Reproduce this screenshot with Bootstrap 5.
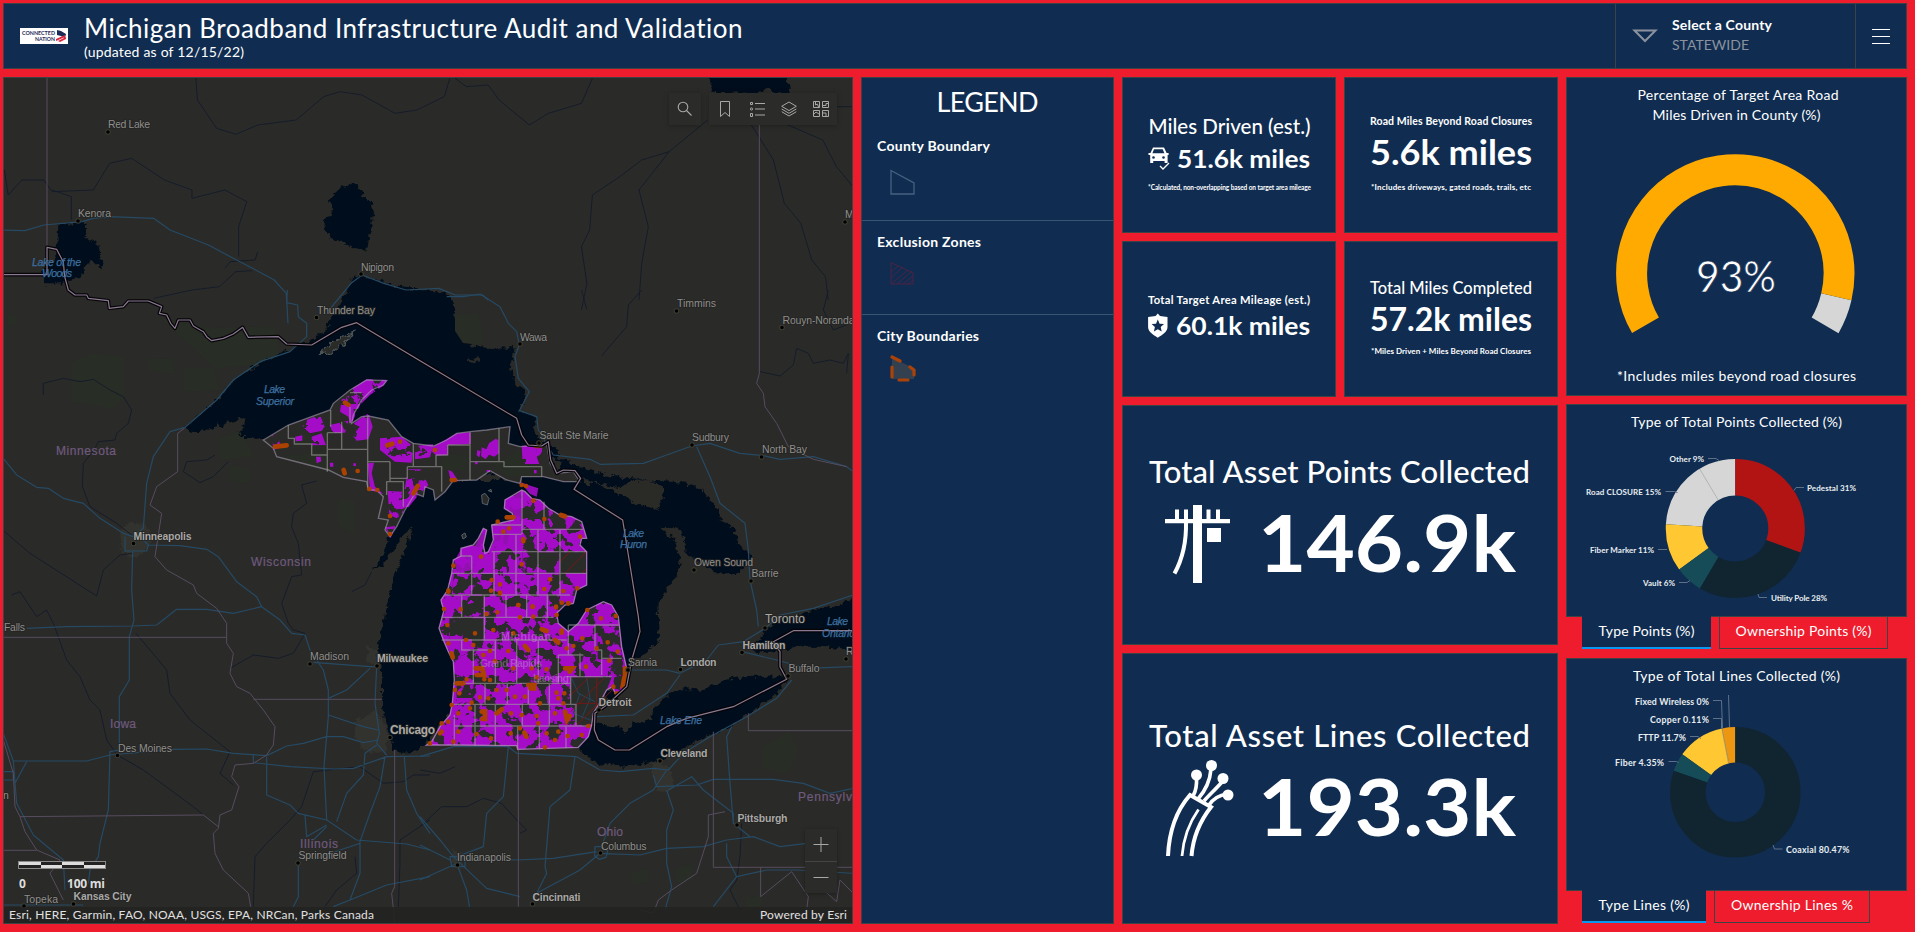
<!DOCTYPE html>
<html lang="en">
<head>
<meta charset="utf-8">
<title>Michigan Broadband Infrastructure Audit and Validation</title>
<link href="https://cdn.jsdelivr.net/npm/bootstrap@5.3.0/dist/css/bootstrap.min.css" rel="stylesheet">
<script src="https://cdn.jsdelivr.net/npm/bootstrap@5.3.0/dist/js/bootstrap.bundle.min.js"></script>
<style>
:root{--red:#ee1c2c;--navy:#102d51;--edge:#3d4345}
body{background:var(--red);color:#fff;font-family:Lato,"Liberation Sans",sans-serif;font-size:14px;line-height:20px;width:1915px;height:932px;padding:3px 8px 8px 3px;overflow:hidden}
.panel{background:var(--navy);border:1px solid var(--edge);overflow:hidden}
.topbar{height:66px}
.topbar h1{font-size:26px;line-height:30px;font-weight:400}
.brandbox{width:48px;height:16px}
.sel{width:240px;border-left:1px solid var(--edge)}
.burger{width:51px;border-left:1px solid var(--edge)}
.mute{color:#8b929d}
.board{display:grid;grid-template-columns:850px 253px 436px 341px;gap:8px;height:847px}
.mid{display:grid;grid-template-columns:214px 214px;grid-template-rows:156px 156px 240px 271px;gap:8px}
.wide{grid-column:span 2}
.panel svg,.brandbox svg{display:block}
.lg-title{font-size:27px;font-weight:400;line-height:47px;height:52px}
.lg-item{height:94px;padding:11px 15px 0;border-bottom:1px solid #3a5474}
.lg-item:first-of-type{height:91px;padding-top:6px}
.lg-item:last-child{border:0}
.lg-item b{font-weight:700;line-height:20px;display:block}
.lg-item svg{margin:8px 0 0 13px}
.gauge{height:319px}
.pts{height:213px}.lns{height:233px}
.tabs{height:32px;padding-left:16px;margin-top:-1px;gap:8px}
.tb{height:33px;line-height:30px;text-align:center;border:1px solid var(--edge);border-top:0;white-space:nowrap}
.tb.on{background:var(--navy);border:0;border-bottom:2px solid #0a97f0}
.mapwrap svg text{font-family:"Liberation Sans",sans-serif}
.tool{background:#2b2b2a;height:32px;top:15px;box-shadow:0 1px 5px rgba(0,0,0,.25)}
.tool svg{width:16px;height:16px}
.zoomer{right:15px;bottom:30px;width:32px;background:#2b2b2a;box-shadow:0 1px 4px rgba(0,0,0,.3)}
.credit{left:0;right:0;bottom:0;height:16px;background:rgba(34,34,33,.88);font-size:12px;line-height:15px;padding:0 5px;color:#e0e0e0}
.scale{left:14px;bottom:30px;width:90px;color:#ddd;font-family:"Open Sans",sans-serif;font-size:12px;line-height:18px;font-weight:700}
.ct{font-size:10.5px;fill:#8f8f8c;paint-order:stroke;stroke:#242423;stroke-width:1.5px}
.cb{font-weight:700;fill:#a9a9a6}
.st{font-size:12px;fill:#6f5a7e;stroke:#6f5a7e;stroke-width:.2px}
.wt{font-size:10.5px;font-style:italic;fill:#3d6f9f;stroke:#3d6f9f;stroke-width:.25px}
.rd path,.rv path,.bd path,.cl path,#border,#towns{vector-effect:non-scaling-stroke;fill:none;stroke-linejoin:round}
.rd path{stroke:#264a64;stroke-width:1.2px}
.rv path{stroke:#151c2a;stroke-width:1px}
.bd path{stroke:#574c5f;stroke-width:1px}
.cl path{stroke:#9c9c9a;stroke-opacity:.6;stroke-width:1.4px}
.town{stroke:#ac4200;stroke-width:14;stroke-linecap:round;fill:none}
.ind{fill:#fff}
.ind .bg{font-weight:700}.ind .md{font-weight:500}
.tinyl{font-size:8px;font-weight:700;fill:#e9edf2}
.lead-l{fill:none;stroke:#5c7089;stroke-width:1}
</style>
</head>
<body>
<header class="panel topbar d-flex align-items-stretch mb-2">
  <div class="d-flex align-items-center flex-grow-1" style="padding-left:16px">
    <div class="brandbox"><svg width="48" height="16"><rect width="48" height="16" fill="#fff"/><text x="2" y="7.2" font-size="6" font-weight="700" fill="#1c2a57" textLength="33" lengthAdjust="spacingAndGlyphs">CONNECTED</text><text x="15" y="13.4" font-size="6" font-weight="700" fill="#1c2a57" textLength="20" lengthAdjust="spacingAndGlyphs">NATION</text><path d="M37 2l4 1 5 3-1 4-4-2-4-1z" fill="#1c2a57"/><path d="M36 11l9-4v2l-9 4zM38 13l8-4v2l-6 3z" fill="#e0243b"/></svg></div>
    <div style="padding-left:16px"><h1 class="mb-0"><span data-w="659">Michigan Broadband Infrastructure Audit and Validation</span></h1><div style="line-height:17px"><span data-w="160">(updated as of 12/15/22)</span></div></div>
  </div>
  <div class="sel d-flex align-items-center">
    <svg class="ms-3 me-3" width="26" height="14" viewBox="0 0 26 14"><path d="M2.500 1.500h21L13 12z" fill="none" stroke="#8b929d" stroke-width="2"/></svg>
    <div style="line-height:20px;margin:-2px 0 0 -2px"><div class="fw-bold"><span data-w="100">Select a County</span></div><div class="mute"><span data-w="77">STATEWIDE</span></div></div>
  </div>
  <div class="burger d-flex align-items-center justify-content-center"><svg width="18" height="16"><path d="M0 1.500h18M0 8.500h18M0 15.500h18" stroke="#fff"/></svg></div>
</header>

<main class="board">
  <section class="panel mapwrap position-relative">
    <svg width="848" height="845" viewBox="4 78 848 845">
      <defs>
        <filter id="rough" x="-5%" y="-5%" width="110%" height="110%"><feTurbulence type="fractalNoise" baseFrequency=".06" numOctaves="3" seed="4"/><feDisplacementMap in="SourceGraphic" scale="26" xChannelSelector="R" yChannelSelector="G"/></filter>
        <filter id="dense" x="0" y="0" width="100%" height="100%" color-interpolation-filters="sRGB"><feTurbulence type="fractalNoise" baseFrequency=".026" numOctaves="4" seed="23"/><feColorMatrix values="0 0 0 0 .643  0 0 0 0 .047  0 0 0 0 .784  26 0 0 0 -10.8"/><feComposite in2="SourceGraphic" operator="in"/></filter>
        <filter id="thin" x="0" y="0" width="100%" height="100%" color-interpolation-filters="sRGB"><feTurbulence type="fractalNoise" baseFrequency=".03" numOctaves="3" seed="5"/><feColorMatrix values="0 0 0 0 .643  0 0 0 0 .047  0 0 0 0 .784  22 0 0 0 -12"/><feComposite in2="SourceGraphic" operator="in"/></filter>
        <path id="lp" d="M305,600 255,630 253,655 277,670 280,690 215,705 220,750 205,785 195,790 190,765 200,720 190,715 175,745 160,765 123,775 123,798 100,810 95,850 83,900 63,930 65,940 72,960 57,1015 70,1050 85,1085 100,1115 103,1170 97,1240 90,1275 60,1310 35,1355 20,1365 105,1365 290,1367 293,1378 475,1372 505,1340 515,1305 520,1270 535,1245 560,1200 577,1190 590,1220 615,1190 620,1135 605,1070 595,980 575,945 550,935 500,960 475,1000 445,1025 415,1000 410,970 435,945 460,940 470,900 500,885 500,785 480,765 485,745 500,745 485,695 455,680 420,675 385,655 360,630 335,625 315,605Z"/>
        <path id="up" d="M790,450 865,405 990,360 1000,340 1050,300 1100,270 1160,272 1150,285 1115,300 1085,330 1060,375 1055,400 1085,380 1105,378 1165,390 1205,440 1240,460 1300,468 1340,450 1370,430 1410,425 1460,420 1530,410 1525,460 1560,470 1620,465 1640,460 1645,490 1650,520 1670,550 1720,545 1740,575 1690,575 1630,560 1565,560 1560,580 1520,570 1470,542 1430,570 1360,572 1335,605 1305,630 1300,600 1275,590 1270,620 1245,610 1215,660 1190,710 1170,740 1155,720 1165,690 1135,685 1150,620 1130,600 1105,600 1100,575 1030,562 985,540 830,500 820,475Z"/>
        <path id="border" d="M-1260,-46H-1119V-128L-1090,-122-1070,-84-1066,-40-1055,0-1035,15-1000,15-995,25-935,32-932,55-890,50-875,33-815,33-775,50-782,70-760,75-748,100-735,115-725,90-690,90-680,108-650,125-640,140-625,152-590,145-560,132-532,112-515,142-425,140-400,162-325,165-235,112-190,98 0,212 290,385 305,435 325,465 365,468 385,455 392,510 410,550 430,540 465,542 482,565 462,598 608,690 655,980 660,1025 635,1110 620,1190 560,1245 525,1270 523,1320 535,1350 585,1380 628,1380 740,1310 800,1285 940,1250 1100,1168 1080,1130 1080,1085 1060,1055 1120,1022H1300"/>
        <path id="towns" d="M108,132h0M78,221h0M361,274h0M316.500,317.500h0M520,344h0M676.500,311h0M782,327.500h0M539,443h0M692,445h0M761.500,457h0M694,570h0M751,581h0M133.500,543.500h0M310,664h0M377,666h0M390,737.500h0M117.500,755.500h0M298,863h0M24,906h0M73.500,904h0M765,628h0M742,652.500h0M680.500,669.500h0M788,676h0M628,670h0M599,710h0M660,761h0M600.500,853h0M737,825h0M532.500,904h0M457.500,865h0M846,659h0M845,222h0"/>
      </defs>
      <rect x="3" y="77" width="850" height="847" fill="#2a2a28"/>
      <!-- forests and urban areas -->
      <g fill="#282d26">
        <path d="M160,318l55,10 60,-2 5,30-20,8-45,5-25,-24zM72,362l20,-9 32,4v40l-12,12-40,-8zM148,358l24,1 4,15-28,-4zM184,368h30l6,22-36,2zM220,438l22,-8 12,26-34,4zM230,465l20,4v14l-22,-2zM338,500h16v34l-16,-8zM8,315h8v10h-8z"/>
        <path d="M762,746l28,-14 8,20-10,22-26,-5zM630,872l18,-3v12l-16,4zM676,868l16,-4v16l-16,3zM745,900l16,-5v14h-14z"/>
      </g>
      <g fill="#30302e" filter="url(#rough)" transform="scale(.33333)"><path d="M354,1590l36,-24 54,12 6,60-48,42-36,-24zM1065,2166l60,-36 36,54v72l-54,6-42,-48zM1950,2286l60,12 12,66-48,12zM1356,2550l30,6v36h-30zM1104,1935l30,12-6,48-30,-6z"/></g>
      <!-- lakes -->
      <g fill="#000e1a" filter="url(#rough)" transform="translate(420 290) scale(.33333)">
        <path d="M-219,0 -204,-36 -177,-45 -126,-30 -75,-12 0,0 66,6 96,21 114,105 150,165 201,174 285,171 270,240 294,285 321,306 297,363 351,384 339,426 375,465 420,480 360,540 -60,570 -420,480 -465,447 -501,441 -540,441 -522,381 -561,393 -639,420 -687,426 -705,411 -609,330 -558,270 -480,216 -390,180 -369,165 -324,150 -285,120 -261,75 -240,45Z"/>
        <path d="M30,570 -40,650 -96,741 -111,789 -144,840 -111,825 -75,774 -30,714 -25,720 -45,780 -75,855 -96,930 -105,990 -126,1059 -114,1140 -114,1260 -96,1311 -81,1380 -39,1392 15,1365 120,1230 240,810 360,630 330,570Z"/>
        <path d="M300,560 360,455 395,490 430,510 520,548 600,560 700,572 800,578 850,600 880,640 905,690 940,715 960,765 995,800 985,825 940,857 880,845 850,825 800,790 790,740 770,712 720,710 765,750 780,800 775,850 735,910 715,940 719,1040 690,1080 640,1110 625,1140 600,1180 550,1020 420,1060 400,970 480,800 330,600Z"/>
        <path d="M520,1290 545,1305 600,1310 610,1330 640,1300 690,1290 700,1260 740,1215 800,1195 850,1200 930,1165 1000,1160 1080,1160 1105,1165 1060,1220 990,1270 930,1310 860,1340 800,1370 750,1400 700,1415 610,1430 560,1420 540,1425 490,1390 470,1370 500,1330Z"/>
        <path d="M1310,920 1240,950 1150,970 1060,1000 1035,1020 1020,1050 990,1075 1010,1088 1080,1083 1120,1070 1200,1070 1310,1082Z"/>
        <path d="M550,1215 585,1190 600,1225 570,1245Z"/>
      </g>
      <path d="M455,315l24,-2 4,26-3,6-17,-2-8,-12z" fill="#282d26"/>
      <g fill="#000e1a" filter="url(#rough)" transform="scale(.33333)">
        <path d="M1028,560 1069,552 1090,580 1102,600 1122,625 1110,700 1099,750 1060,740 987,715 970,660 997,640 987,600Z"/>
        <path d="M175,675 260,665 255,710 295,735 312,810 270,780 246,830 190,850 131,850 123,810 164,780 172,720Z"/>
        <path d="M2125,220 2352,220 2375,280 2320,280 2300,262 2265,282 2138,278Z"/>
      </g>
      <g fill="#2a2a28" filter="url(#rough)" transform="translate(420 290) scale(.33333)">
        <path d="M520,575 600,592 640,572 690,570 735,595 715,660 640,640 600,612Z"/>
        <path d="M395,500 425,515 420,540 400,530ZM140,210 175,205 180,218 150,218ZM490,565l30,10-20,15z"/>
        <path d="M-300,190 -250,150 -200,125 -220,155 -270,190Z" stroke="#4b5557" stroke-width="4"/>
      </g>
      <g fill="#2a2a28" stroke="#56606a" stroke-width="3" transform="translate(420 290) scale(.33333)"><path d="M185,615l10,-5 12,15-5,20-15,-5zM125,735l10,-6 4,12-10,6zM205,602l8,-4 2,8z"/></g>

      <!-- rivers -->
      <g class="rv">
        <g transform="translate(0 290) scale(.33333)"><path d="M130,315 130,280 190,265 240,275 280,268 330,300 370,320 395,360 385,400 350,430 345,450 295,455 285,475 250,520 247,590 270,650 350,700 395,735M10,722 90,790 290,918 310,840 360,795 400,790M35,915 60,905 110,980 140,960 160,1000 200,1110 240,1160 270,1230 300,1260 320,1350 352,1395 430,1440 580,1550 610,1575M408,1030 450,1080 500,1140 510,1210 570,1290 620,1330 690,1385 660,1450 700,1485M550,545 560,515 620,510 645,495M550,545 600,578 640,560 685,515M950,573 905,585 920,640 880,670 875,710 895,760 905,855 875,860 845,940 865,1000 880,1020 915,1030 880,1090 835,1105 760,1095 690,1135M1055,905 1095,885 1115,845M1290,1455 1240,1455 1210,1475 1150,1480 1080,1430 940,1445 905,1550 870,1590 800,1660 765,1700 760,1850M1290,1590 1200,1650 1200,1720 1195,1850M975,1850 1010,1800 1070,1750 1065,1700"/></g>
        <g transform="translate(420 290) scale(.33333)"><path d="M485,0 500,58M665,0 625,45 620,110 545,197M1225,0 1210,60 1240,120 1290,100M1020,245 1080,258 1120,225 1130,175 1165,190 1180,220 1230,210 1270,220 1285,190 1280,250M0,1440 60,1450 105,1430M0,1610 65,1550 140,1550 190,1525 245,1540 290,1590 320,1620 300,1630M965,1600 960,1700 950,1770 930,1800 960,1860"/></g>
        <g transform="scale(.5485 .33333)"><path d="M357,233 360,300 395,385 430,403 470,375 540,360 590,290 620,275 660,285 720,340 760,330 810,290 820,235M830,235 850,260 890,255 910,300 965,375 1000,340 1060,310 1080,235M8,510 15,585 40,540 80,540 95,575 170,570 200,490 240,475 300,540 350,570 350,595 410,570 450,605 435,680 435,770M130,660 130,590 95,570M410,805 420,785 465,780 470,755M280,895 350,870 400,860 430,815 460,812M1290,360 1220,455 1170,480 1130,530 1080,585 1075,690 1060,740 1070,850 1060,930M1220,455 1165,570 1182,680 1170,790 1165,900M1370,375 1410,480 1430,610 1460,670 1480,780 1505,830 1510,900M1430,370 1500,420 1525,500 1555,560M1525,320H1560"/></g>
      </g>
      <!-- highways -->
      <g class="rd">
        <g transform="translate(0 290) scale(.33333)"><path d="M10,505 50,555 110,592 145,595 190,625 250,640 300,685 370,730 400,740 430,715 440,580 460,500 510,425 555,412 650,330 700,270 780,215 870,185 920,140 920,100 895,80 893,45 860,38 862,0M375,740V783H440L445,765 420,740M445,765 540,767 620,778 655,800 710,875 770,920 785,950 840,990 875,1030 915,1035 930,1080 970,1140 985,1200 985,1280 972,1430 980,1590M398,785 395,900 402,990 388,1040 388,1170 358,1220 358,1380 330,1385 325,1560 300,1660 295,1700 270,1740 265,1780M80,1015 200,1010 400,1008 470,1005 530,958 620,958 700,970 785,950M40,1413 260,1413 330,1395 520,1378 620,1377 700,1390 800,1397 860,1368 910,1360 980,1340 1030,1340 1090,1358 1135,1350M760,1395 760,1418 870,1430 1000,1437 1060,1435 1160,1400 1290,1398M800,1400 800,1515 870,1545 895,1570 980,1590 1070,1650 1220,1662 1290,1680M940,1117 1110,1130 1130,1130 1125,1240 1138,1330 1130,1360 1160,1395M985,1225 1040,1200 1110,1135M985,1275 1090,1310 1135,1320M1010,1595 1040,1510 1090,1455 1095,1390 1130,1365M1155,1400 1140,1490 1110,1570 1080,1655 1080,1750 1050,1830 1000,1850M1213,1400 1220,1500 1250,1570 1290,1630M895,1720 895,1820 880,1850M915,1575 920,1640 980,1605M940,1710 1020,1680 1080,1660M1050,1830 1160,1785 1290,1760M10,1330 40,1413 50,1540 100,1635 190,1710 195,1800M45,1480 80,1415M10,1445 40,1445 40,1470 12,1470M10,1845 250,1845M940,1650 980,1610"/></g>
        <g transform="translate(420 290) scale(.33333)"><path d="M80,20 130,20 180,12 240,50 265,100 290,125 298,165 285,200 295,265 328,305 298,362 350,380 355,420 385,470 400,495 510,508 540,523 670,520 740,495 815,468 870,460 960,490 1030,497 1080,508 1180,500 1280,530 1300,545M830,470 870,560 900,640 975,700 985,780 990,870 1010,960 1015,1010M1300,915 1180,955 1080,975 1035,1015 970,1055 895,1065 860,1110 780,1150 740,1140 620,1140M780,1155 740,1210 640,1275 530,1280M965,1085 1070,1110 1160,1135 1300,1130M1115,1170 1070,1225 980,1280 870,1340 790,1390 745,1440 700,1435 600,1445 540,1440 470,1400 290,1390 265,1370 100,1370 0,1400M265,1370 250,1520 200,1570 190,1670 110,1700M465,1400 450,1500 390,1550 375,1730 380,1750 340,1830M0,1580 60,1650 100,1700 200,1795 300,1820M0,1665 90,1710M0,1770 100,1725 110,1720 140,1800 150,1860M130,1705 290,1710 400,1705 530,1685M540,1690 660,1695 740,1675 850,1670 920,1650 1000,1640 1080,1670 1160,1660M540,1690 480,1740 350,1810M545,1670 570,1600 630,1540 700,1500 740,1440M740,1500 760,1560 740,1620 740,1720 755,1790 735,1860M700,1455 710,1490 830,1485 880,1468 1060,1468 1150,1480 1230,1510 1300,1495M745,1500 815,1460 850,1500 940,1570 940,1600 990,1640M920,1660 920,1700 950,1760 1040,1740 1130,1740 1300,1750M950,1760 880,1850M935,1310 920,1340 930,1480 940,1600M525,1670h20l18,12-5,20-20,6-14,-10zM90,1700h45v30h-40z"/></g>
        <g transform="scale(.5485 .33333)"><path d="M0,690 45,692 80,675 150,665 170,655 200,650 280,655 310,690 380,735 420,770 455,800 500,840 522,880 525,970M600,930 640,850 660,825 700,850 740,870 800,865 830,885 880,885 890,900"/></g>
      </g>
      <!-- state lines -->
      <g class="bd">
        <g transform="translate(0 290) scale(.33333)"><path d="M553,415 533,430 533,545 470,590 450,645 485,670 465,800 500,840 580,885 590,910 650,955 680,1000 680,1060 700,1090 690,1150 710,1190 750,1210 790,1260 825,1310 820,1365 800,1395 760,1420 705,1425 695,1460 717,1490 695,1560 660,1575 655,1615 640,1630 645,1690 670,1740 745,1810 752,1850M10,1042H680M760,1228H1147M60,1580 610,1575 655,1610M10,1681H110M60,1580 75,1625 110,1680 180,1710 150,1750 190,1830M10,1350 40,1450 45,1550 60,1580M1184,1380V1790L1175,1810 1185,1900"/></g>
        <g transform="translate(420 290) scale(.33333)"><path d="M295,1380V1850M880,1325V1732H1300M985,1270V1322H1300M1018,-500V250L1010,280 1030,310 1035,350 1070,400 1105,470 1180,508 1280,530M1022,1732V1820L1115,1745 1165,1820 1160,1860M1165,1760 1250,1835 1260,1770 1300,1810M915,1565 865,1575 865,1640 830,1750 755,1800 715,1830 700,1870 660,1860"/></g>
        <path d="M47,78V275"/>
      </g>
      <!-- Michigan -->
      <g transform="translate(0 290) scale(.33333)">
        <use href="#up" fill="#2a2b28"/>
        <path d="M868,440 982,425V540L840,500 935,490V465H885ZM1325,495H1400V540H1325ZM1420,470 1490,520 1560,480 1600,560H1520Z" fill="#282d26"/>
        <path d="M1050,300 1100,268 1162,270 1150,287 1110,315 1080,345 1062,385 1055,405 1105,368 1118,410 1105,448 1070,452 1050,425 1050,400 1045,380 1020,365 1025,330ZM895,398 960,375 978,420 930,430ZM935,440 965,430 978,465 936,466ZM990,405 1045,392 1035,428 998,430ZM815,435 835,438 842,472 820,480ZM1140,445 1205,440 1240,470 1235,518 1185,515 1140,480ZM1245,468 1300,463 1290,502 1245,508ZM1225,538 1262,538 1285,585 1250,622 1215,664 1190,685 1168,675 1163,603 1212,605ZM1155,712 1187,708 1172,744ZM1565,468 1640,460 1642,482 1610,500 1618,522 1568,522Z" filter="url(#dense)"/>
        <g fill="#a40cc8">
          <path d="M1260,490 1300,470 1370,430 1412,427 1412,462 1343,465 1343,495 1310,497 1290,480ZM1103,520 1122,518 1115,550 1125,590 1150,612 1110,600ZM1345,540l12,5 18,28-22,2zM1445,472l14,6 8,-18 20,-14 8,4 2,40-14,10-16,-6-10,14-14,-10zM1432,480l10,4-4,18-8,-6zM948,500l14,0 2,14-14,6zM1262,570l18,5v18l-20,2zM885,440l22,-4v16l-20,2zM990,518h10v12h-10zM1060,520h8v8h-8zM1425,515h8v8h-8zM1460,540h10v6h-10zM1602,540h8v10h-8z"/>
        </g>
      </g>
      <g transform="translate(420 290) scale(.33333)">
        <use href="#lp" fill="#2a2c29"/>
        <g filter="url(#dense)"><use href="#lp"/></g>
        <path fill="#a40cc8" d="M305,603 258,632 256,655 280,670 282,692 218,707 222,750 210,785 200,800H225L240,770 290,780 300,700 305,680ZM123,778 165,768 190,722 196,735 185,790 160,840 110,848 104,812Z" opacity=".85"/>
        <path fill="#2a2c29" d="M377,650 420,675 455,690 440,716H377ZM308,787H418V848H308ZM102,852H220V913H95ZM125,917h66v63h-66zM88,985h103v63h-103zM533,1008h64l8,100h-72zM420,787h80v62h-80zM452,1162H575L560,1200 535,1245 515,1303 470,1305V1243H452ZM110,1184h50v40h-50z"/>
        <path filter="url(#thin)" d="M377,650 420,675 465,690V716H377ZM308,787H418V848H308ZM102,852H220V913H95ZM125,917h66v63h-66zM88,985h40v63h-40zM533,1008h64l8,100h-72zM110,1184h50v40h-50z"/>
        <path d="M455,1165l20,45 50,25M480,1210l-20,60 50,20M500,1165l10,60-25,60" stroke="#25455c" stroke-width="3" fill="none"/>
        <path d="M420,815l30,-30M435,850l65,-65M485,850l15,-15M452,1215l55,-53M452,1265l100,-100M470,1305l110,-108M470,1240h60M530,1162v90" stroke="#721818" stroke-width="3" fill="none"/>
        <path d="M300,575l25,10 30,10-5,25-20,-8z" fill="#a40cc8" opacity=".9"/>
      </g>
      <g class="cl">
        <g transform="translate(0 290) scale(.33333)"><use href="#up" fill="none" stroke="#a79bb0" stroke-opacity=".6" stroke-width="4"/><path d="M992,360V410M865,405V445H883V462H935V495H982M982,428V545M1025,395V478M982,428H1025M982,478H1103M1103,380V600M1103,515H1170M1170,515V575H1160V615M1170,565H1222M1222,530V565M1222,530H1325V605M1240,460V530M1308,495V530M1343,465V495H1308M1343,465H1410M1410,427V570M1410,515H1512V530H1625V560M1497,415V515M1050,308H1085M1050,350V400M1160,575H1210V650"/></g>
        <g transform="translate(420 290) scale(.33333)"><use href="#lp" fill="none" stroke="#b986c8" stroke-opacity=".8" stroke-width="4"/><path d="M215,705H305M305,718H490M220,733H305M215,785H500M95,850H500M75,915H450M306,600V733M372,635V718M288,733V915M354,718V915M420,718V915M222,785V915M155,798V915M123,798H155M125,915V980M65,982H400M193,915V1050M258,915V982M320,915V982M382,915V982M65,1050H440M125,1050V1080H226M160,1080V1180M226,1050V1180M290,1050V1180M355,1050V1180M415,1095V1180M100,1180H450M415,1095H490M480,1090V1160M445,1005V1095M440,1160H575M525,1005V1080H545V1155M445,1005H595M545,1105H605M97,1243H468M195,1180V1243M262,1180V1243M325,1180V1243M388,1180V1308M165,1243V1367M103,1275V1365M226,1243V1367M307,1243V1308M103,1308H515M358,1308V1378M293,1308V1378M438,1308V1375M452,1160V1243M468,1243V1308"/></g>
      </g>
      <g class="town">
        <path transform="translate(425 590) scale(.33333)" d="M70,5h0M225,8h0M57,57h0M107,58h0M185,72h0M217,67h0M280,45h0M323,50h0M285,82h0M325,80h0M393,50h0M430,40h0M395,75h0M487,60h0M528,85h0M572,78h0M67,105h0M150,130h0M123,150h0M145,165h0M70,160h0M205,120h0M265,130h0M350,118l15,5M410,122v6M390,150l10,8M472,145h0M548,157h0M425,175h0M445,168h0M515,175h0M578,185h0M553,212h0M80,190l3,12M195,183h0M175,195h0M210,213h0M250,183h0M300,168l10,12M152,235h20l5,20h-22M265,235h0M320,235h0M335,262h0M365,238h0M420,235h22l-8,10M483,230h0M600,235v20M598,262l-5,28M575,310h0M565,290h0M90,300h0M95,280h20M125,268h0M103,310h0M178,268h0M195,270h0M215,300h0M165,322h0M190,325h0M245,300h0M270,320h0M310,285h18v10h-12M300,320h0M345,340h0M395,308h0M418,310h0M400,325h0M415,340h0M140,338h0M135,355h0M80,345h0M100,370h0M70,395h0M50,400h0M45,430h0M170,365h10v22h-8M215,370l15,-12M258,370h0M290,375h0M335,378h0M390,370h0M420,365l6,25 8,-12M340,400h0M50,425h0M100,425h0M155,432h0M198,445h0M257,430h0M285,415h0M298,428l6,12M365,430h0M390,450h0M400,425h0M428,438h0M470,435h0M490,408h0M360,472h0M15,460h0M85,455h0"/>
        <path transform="translate(425 430) scale(.33333)" d="M245,262h20M218,275h0M252,295h0M235,305h0M325,212h0M358,267h0M408,255l12,4M465,320h0M295,328v6M168,380h0M85,407h0M290,403h0M200,450h0M225,463h0M198,482h0M225,490h0M375,448h0M358,477h0M415,483h0M457,475h0M70,482h0M430,520h0M410,518h0M393,532h0M280,525h0M323,530h0M290,165h0M303,168h0M332,48h16M30,60h0M80,150h10"/>
        <path transform="translate(0 290) scale(.33333)" d="M825,470l35,-4M1035,338l10,6M1162,466l15,-5M1200,455h0M1031,540l3,10M1073,543h0M1108,597h0M1132,600h0M1240,610l13,-22M1170,678h0M1170,732h0"/>
      </g>
      <!-- national border -->
      <g transform="translate(420 290) scale(.33333)"><use href="#border" stroke="#050506" stroke-width="3.6"/><use href="#border" stroke="#8b7993" stroke-width="1.2"/></g>
      <!-- place markers -->
      <g stroke-linecap="round"><use href="#towns" stroke="#3c3d33" stroke-width="5.500"/><use href="#towns" stroke="#000" stroke-width="3.600"/></g>
      <g class="ct">
        <text x="108" y="128" textLength="42">Red Lake</text><text x="78" y="217" textLength="33">Kenora</text><text x="361" y="271" textLength="33">Nipigon</text><text x="317" y="313.500" textLength="58">Thunder Bay</text><text x="520" y="340.500" textLength="27">Wawa</text><text x="677" y="307" textLength="39">Timmins</text><text x="782.500" y="323.500" textLength="72">Rouyn-Noranda</text><text x="539.500" y="439" textLength="69">Sault Ste Marie</text><text x="692" y="441" textLength="37">Sudbury</text><text x="762" y="453" textLength="45">North Bay</text><text x="694" y="566" textLength="59">Owen Sound</text><text x="751.500" y="577" textLength="27">Barrie</text><text x="4" y="630.500" textLength="21">Falls</text><text x="310" y="660" textLength="39">Madison</text><text x="118" y="751.500" textLength="54">Des Moines</text><text x="298.500" y="859" textLength="48">Springfield</text><text x="24" y="903" textLength="34">Topeka</text><text x="765" y="623" style="font-size:12px;fill:#a9a9a6" textLength="40">Toronto</text><text x="788.500" y="672" textLength="31">Buffalo</text><text x="628" y="666" textLength="29">Sarnia</text><text x="601" y="849.500" textLength="45.500">Columbus</text><text x="457" y="861" textLength="54">Indianapolis</text><text x="846" y="655">R</text><text x="845" y="218">M</text><text x="3" y="799">n</text>
      </g>
      <g class="ct cb">
        <text x="133.500" y="539.500" textLength="58">Minneapolis</text><text x="377" y="662" textLength="51">Milwaukee</text><text x="390" y="733.500" style="font-size:12px" textLength="45">Chicago</text><text x="73.500" y="900" textLength="58">Kansas City</text><text x="742.500" y="649" textLength="43">Hamilton</text><text x="680.500" y="666" textLength="36">London</text><text x="598.500" y="706" textLength="33">Detroit</text><text x="660.500" y="757" textLength="47">Cleveland</text><text x="737.500" y="821.500" textLength="50">Pittsburgh</text><text x="532.500" y="900.500" textLength="48">Cincinnati</text>
      </g>
      <g style="font-size:10.500px;fill:#cfc3d6;opacity:.32;font-weight:700"><text x="501" y="639.500" textLength="50">Michigan</text><text x="480" y="667" textLength="62">Grand Rapids</text><text x="533" y="681.500" textLength="36">Lansing</text></g>
      <g class="st"><text x="56" y="454.500" textLength="60">Minnesota</text><text x="251" y="566" textLength="60">Wisconsin</text><text x="110" y="728" textLength="26">Iowa</text><text x="300" y="847.500" textLength="38">Illinois</text><text x="597" y="835.500" textLength="26">Ohio</text><text x="798" y="801" textLength="54">Pennsylv</text></g>
      <g class="wt"><text x="264" y="393" textLength="21">Lake</text><text x="256" y="404.500" textLength="38">Superior</text><text x="623" y="537" textLength="21">Lake</text><text x="620" y="548" textLength="27">Huron</text><text x="660" y="723.500" textLength="42">Lake Erie</text><text x="827" y="625" textLength="21">Lake</text><text x="822" y="636.500" textLength="33">Ontario</text><text x="32" y="266" textLength="49">Lake of the</text><text x="42" y="277" textLength="30">Woods</text></g>
    </svg>
    <div class="tool position-absolute d-flex align-items-center justify-content-center" style="right:151px;width:32px"><svg viewBox="0 0 16 16" fill="none" stroke="#a8a8a6" stroke-width="1.100"><circle cx="6" cy="6" r="4.800"/><path d="M9.500 9.500l5 5"/></svg></div>
    <div class="tool position-absolute d-flex align-items-center justify-content-around" style="right:15px;width:128px">
      <svg viewBox="0 0 16 16" fill="none" stroke="#a8a8a6"><path d="M3.500.5h9v15l-4.500-4-4.500 4z"/></svg>
      <svg viewBox="0 0 16 16" fill="none" stroke="#a8a8a6"><path d="M6 2.500h10M6 8h10M6 14h10M1.500 1.500h2v2h-2zM1.500 12.500h2v3h-2z"/><circle cx="2.500" cy="8" r="1.100"/></svg>
      <svg viewBox="0 0 16 16" fill="none" stroke="#a8a8a6"><path d="M8 1l7.300 4.300L8 9.600.7 5.300zM.7 8L8 12.300 15.300 8M.7 10.700L8 15l7.300-4.300"/></svg>
      <svg viewBox="0 0 16 16" fill="none" stroke="#a8a8a6"><path d="M.5.5h6v6h-6zM9.500.5h6v6h-6zM.5 9.500h6v6h-6zM9.500 9.500h6v6h-6zM2.500 1v3l2-1 1 3M10 4.500h3v-2h2M1 13l2-2 3 2M10 12h3v3"/></svg>
    </div>
    <div class="zoomer position-absolute"><svg width="32" height="64" fill="none" stroke="#a8a8a6"><path d="M8.500 15.500h15M16 8v15M8.500 48.500h15"/><path d="M0 32.500h32" stroke="#444442"/></svg></div>
    <div class="scale position-absolute"><svg width="88" height="8" style="margin-bottom:6px"><rect x=".5" y=".5" width="87" height="7" fill="#222" stroke="#8a8a88"/><path d="M1 1h22v3h-22zM44 1h22v3h-22zM23 4h21v3h-21zM66 4h21v3h-21z" fill="#ddd"/></svg><div class="d-flex justify-content-between" style="padding:0 3px 0 1px"><span>0</span><span data-w="38">100 mi</span></div></div>
    <div class="credit position-absolute d-flex justify-content-between"><span data-w="365">Esri, HERE, Garmin, FAO, NOAA, USGS, EPA, NRCan, Parks Canada</span><span data-w="87">Powered by Esri</span></div>
  </section>

  <section class="panel">
    <header class="lg-title text-center"><span data-w="102">LEGEND</span></header>
    <div class="lg-item"><b><span data-w="113">County Boundary</span></b><svg width="25" height="26" style="margin-top:13px"><path d="M1 1.500L24 14v11H1z" fill="none" stroke="#46607f" stroke-width="1.300"/></svg></div>
    <div class="lg-item"><b><span data-w="104">Exclusion Zones</span></b><svg width="25" height="26"><path d="M1 2.500L23 13v11H1z" fill="none" stroke="#4a2345"/><path d="M1 12l7-6M1 18l12-11M1 24l17-14M7 24l15-13M13 24l10-8M18 24l5-4" stroke="#4a2345"/></svg></div>
    <div class="lg-item"><b><span data-w="102">City Boundaries</span></b><svg width="28" height="28"><path d="M2 4L24 14v11H2z" fill="#33404f"/><path d="M2 3l8 4M2 13v10M9 26h9M20 13l4 3v5" fill="none" stroke="#ab4208" stroke-width="3.200" stroke-linecap="round"/></svg></div>
  </section>

  <section class="mid">
    <div class="panel"><svg class="ind" width="212" height="154" viewBox="1123 78 212 154"><text class="md" x="1148.500" y="134" font-size="20.500" textLength="162" lengthAdjust="spacingAndGlyphs">Miles Driven (est.)</text>
      <path d="M1153 147.500h11l2.600 5.500h2v2h-1v8h-3v-2h-11.400v2h-3v-8h-1.700v-2h2zM1154 149.300l-1.600 4h12l-1.700-4z" fill-rule="evenodd"/><circle cx="1153.500" cy="157.500" r="1.300" fill="#102d51"/><circle cx="1163.500" cy="157.500" r="1.300" fill="#102d51"/><path d="M1160 166l3 3 6-6" fill="none" stroke="#fff" stroke-width="1.300"/>
      <text class="bg" x="1177" y="168" font-size="25.500" textLength="133" lengthAdjust="spacingAndGlyphs">51.6k miles</text><text class="bg" x="1148" y="190" font-size="6.500" textLength="163">*Calculated, non-overlapping based on target area mileage</text></svg></div>
    <div class="panel"><svg class="ind" width="212" height="154" viewBox="1345 78 212 154"><text class="bg" x="1370" y="125" font-size="10.500" textLength="162">Road Miles Beyond Road Closures</text><text class="bg" x="1370" y="165" font-size="34" textLength="162" lengthAdjust="spacingAndGlyphs">5.6k miles</text><text class="bg" x="1371" y="189.500" font-size="8" textLength="160">*Includes driveways, gated roads, trails, etc</text></svg></div>
    <div class="panel"><svg class="ind" width="212" height="154" viewBox="1123 242 212 154"><text class="bg" x="1148" y="303.500" font-size="11.200" textLength="162">Total Target Area Mileage (est.)</text>
      <path d="M1157.800 313.500l2.200 2.500 7.500 1v10c0 5-5 7.500-9.700 10.700-4.700-3.200-9.700-5.700-9.700-10.700v-10l7.500-1z"/><path d="M1157.800 319.500l1.800 4.200 4.400.4-3.300 3 1 4.500-3.900-2.400-3.900 2.400 1-4.500-3.300-3 4.400-.4z" fill="#102d51"/>
      <text class="bg" x="1176" y="335" font-size="25.500" textLength="134" lengthAdjust="spacingAndGlyphs">60.1k miles</text></svg></div>
    <div class="panel"><svg class="ind" width="212" height="154" viewBox="1345 242 212 154"><text class="md" x="1370" y="293.500" font-size="16.500" textLength="162">Total Miles Completed</text><text class="bg" x="1370" y="331" font-size="32" textLength="162" lengthAdjust="spacingAndGlyphs">57.2k miles</text><text class="bg" x="1371" y="354" font-size="8" textLength="160">*Miles Driven + Miles Beyond Road Closures</text></svg></div>
    <div class="panel wide"><svg class="ind" width="434" height="238" viewBox="1123 406 434 238"><text class="md" x="1149" y="482.800" font-size="31" textLength="381">Total Asset Points Collected</text>
      <path d="M1193 505h9v78h-9zM1165 519h65v4.300h-65zM1175 509.500h4v10h-4zM1184 509.500h4v10h-4zM1206.500 509.500h4v10h-4zM1216 509.500h4v10h-4zM1207 528h14v14h-14z"/><path d="M1186 522c.5 20-3 36-11.500 51.500" fill="none" stroke="#fff" stroke-width="4"/>
      <text class="bg" x="1258" y="572" font-size="78" textLength="258" lengthAdjust="spacingAndGlyphs">146.9k</text></svg></div>
    <div class="panel wide"><svg class="ind" width="434" height="269" viewBox="1123 654 434 269"><text class="md" x="1149" y="746.800" font-size="31" textLength="381">Total Asset Lines Collected</text>
      <g fill="none" stroke="#fff" stroke-width="4"><path d="M1168 856c1-24 8-45 22-61l21 12c-11 14-18 30-19.500 49"/><path d="M1182 856c1.500-18 7-33 16.500-46.500" stroke-width="2.800"/><path d="M1193 796c3-5 4-11 3.500-19M1198 799c7-8 12-17 13-30M1204 801c5-6 11-11 18-19M1209 805c4-6 11-10 18-11" stroke-width="3.600"/></g><circle cx="1196.500" cy="775" r="5.500"/><circle cx="1211.500" cy="765.500" r="5.500"/><circle cx="1223" cy="778.500" r="5.500"/><circle cx="1228" cy="795" r="5.500"/>
      <text class="bg" x="1258" y="835.700" font-size="78" textLength="258" lengthAdjust="spacingAndGlyphs">193.3k</text></svg></div>
  </section>

  <section class="d-flex flex-column">
    <div class="panel gauge flex-shrink-0"><svg class="ind" width="339" height="317" viewBox="1567 78 339 317" font-size="14">
      <text x="1637.500" y="100" textLength="201">Percentage of Target Area Road</text><text x="1652.500" y="120" textLength="168">Miles Driven in County (%)</text>
      <g fill="none" stroke-width="31"><circle cx="1735.300" cy="273.500" r="103.700" pathLength="360" stroke="#d6d6d6" stroke-dasharray="17 400" stroke-dashoffset="-223" transform="rotate(150 1735.300 273.500)"/><circle cx="1735.300" cy="273.500" r="103.700" pathLength="360" stroke="#ffaa00" stroke-dasharray="223 400" transform="rotate(150 1735.300 273.500)"/></g>
      <text x="1696" y="292" font-size="43" font-weight="400" textLength="80" lengthAdjust="spacingAndGlyphs" stroke="#102d51" stroke-width=".7">93%</text>
      <text x="1617" y="381" textLength="239">*Includes miles beyond road closures</text></svg></div>
    <div class="panel pts flex-shrink-0 mt-2"><svg class="ind" width="339" height="211" viewBox="1567 405 339 211" font-size="14">
      <text x="1631" y="427" textLength="211">Type of Total Points Collected (%)</text>
      <g fill="none" stroke-width="36.500" transform="rotate(-90 1735.300 528.500)">
        <circle cx="1735.300" cy="528.500" r="51.300" pathLength="360" stroke="#d6d6d6" stroke-dasharray="86.400 400" stroke-dashoffset="-273.600"/>
        <circle cx="1735.300" cy="528.500" r="51.300" pathLength="360" stroke="#ffc832" stroke-dasharray="39.800 400" stroke-dashoffset="-233.800"/>
        <circle cx="1735.300" cy="528.500" r="51.300" pathLength="360" stroke="#154c57" stroke-dasharray="23.200 400" stroke-dashoffset="-210.600"/>
        <circle cx="1735.300" cy="528.500" r="51.300" pathLength="360" stroke="#112530" stroke-dasharray="100.300 400" stroke-dashoffset="-110.300"/>
        <circle cx="1735.300" cy="528.500" r="51.300" pathLength="360" stroke="#b21414" stroke-dasharray="110.300 400"/></g>
      <path d="M1699.700 469l18.500 31" stroke="#a9abb0" stroke-width=".8"/>
      <path class="lead-l" d="M1708 458.500h8l3 2M1665.500 491.500h9l3 1M1658 549.500h9M1679 582.500h8l3-2M1794 490.500l2-3h8M1758 594l1 3.500h8"/>
      <g class="tinyl"><text x="1669.500" y="461.500" textLength="34.500">Other 9%</text><text x="1586" y="494.500" textLength="75">Road CLOSURE 15%</text><text x="1590" y="552.500" textLength="64">Fiber Marker 11%</text><text x="1643" y="585.500" textLength="32">Vault 6%</text><text x="1807" y="490.500" textLength="49">Pedestal 31%</text><text x="1771" y="601" textLength="56">Utility Pole 28%</text></g></svg></div>
    <div class="tabs d-flex flex-shrink-0"><div class="tb on" style="width:129px"><span data-w="96">Type Points (%)</span></div><div class="tb" style="width:169px"><span data-w="136">Ownership Points (%)</span></div></div>
    <div class="panel lns flex-shrink-0" style="margin-top:10px"><svg class="ind" width="339" height="231" viewBox="1567 659 339 231" font-size="14">
      <text x="1633" y="681" textLength="207">Type of Total Lines Collected (%)</text>
      <g fill="none" stroke-width="35.500" transform="rotate(-90 1735.300 792.300)">
        <circle cx="1735.300" cy="792.300" r="47.500" pathLength="360" stroke="#ec9612" stroke-dasharray="11.900 400" stroke-dashoffset="-348.100"/>
        <circle cx="1735.300" cy="792.300" r="47.500" pathLength="360" stroke="#ffc832" stroke-dasharray="42.500 400" stroke-dashoffset="-305.600"/>
        <circle cx="1735.300" cy="792.300" r="47.500" pathLength="360" stroke="#154c57" stroke-dasharray="16.200 400" stroke-dashoffset="-289.400"/>
        <circle cx="1735.300" cy="792.300" r="47.500" pathLength="360" stroke="#112530" stroke-dasharray="289.400 400"/></g>
      <path d="M1722 729l6.500 34" stroke="#a5946a" stroke-width=".9"/>
      <path class="lead-l" d="M1713 700.500h8.500l1 28M1713 718.500h8.500v10M1728.500 695l1 32M1690 736.500h8l3 2M1668.500 761.500h8l2 1M1773 845l1.500 4h8"/>
      <g class="tinyl" style="font-size:8.800px"><text x="1635" y="704.500" textLength="74">Fixed Wireless 0%</text><text x="1650" y="722.500" textLength="59">Copper 0.11%</text><text x="1638" y="740.500" textLength="48">FTTP 11.7%</text><text x="1615" y="765.500" textLength="49">Fiber 4.35%</text><text x="1786" y="852.500" textLength="63.500">Coaxial 80.47%</text></g></svg></div>
    <div class="tabs d-flex flex-shrink-0"><div class="tb on" style="width:124px"><span data-w="91">Type Lines (%)</span></div><div class="tb" style="width:156px"><span data-w="122">Ownership Lines %</span></div></div>
  </section>
</main>
<script>
// Track each label out to its design width.
document.querySelectorAll('[data-w]').forEach(function (el) {
  el.style.display = 'inline-block';
  el.style.whiteSpace = 'nowrap';
  var n = el.textContent.length, w = el.getBoundingClientRect().width, gap = (el.dataset.w - w) / (n - 1);
  el.style.letterSpacing = gap + 'px';
  el.style.marginRight = -gap + 'px';
});
</script>
</body>
</html>
